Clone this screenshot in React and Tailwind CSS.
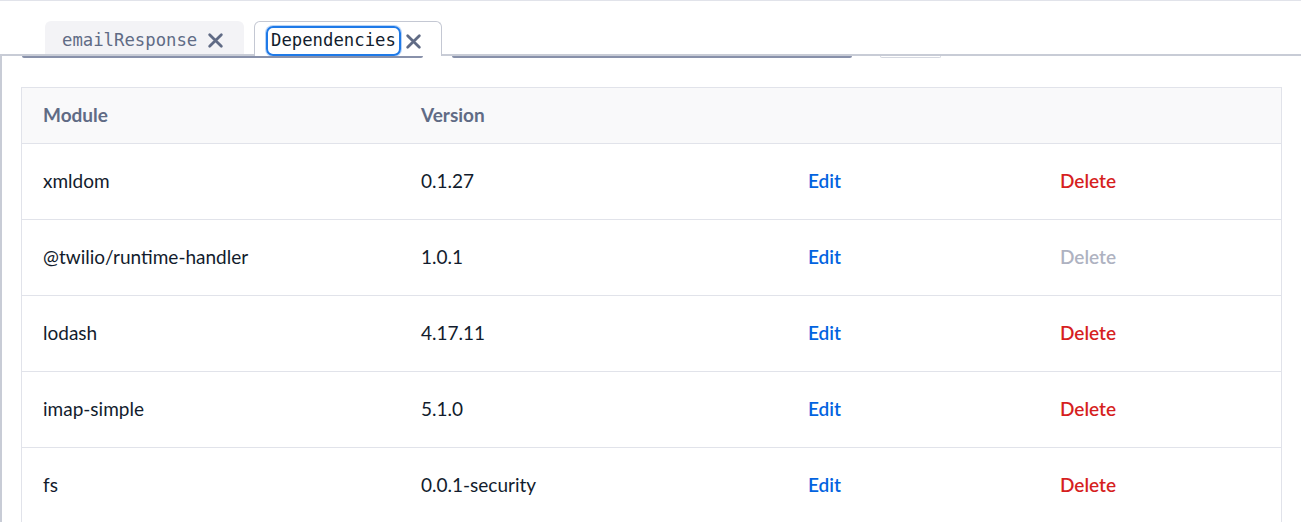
import React from "react";

const rows = [
  { name: "xmldom", version: "0.1.27", canDelete: true },
  { name: "@twilio/runtime-handler", version: "1.0.1", canDelete: false },
  { name: "lodash", version: "4.17.11", canDelete: true },
  { name: "imap-simple", version: "5.1.0", canDelete: true },
  { name: "fs", version: "0.0.1-security", canDelete: true },
];

function CloseIcon() {
  return (
    <svg width="17" height="17" viewBox="0 0 16 16" className="text-[#606b85]">
      <path d="M2.5 2.5l11 11M13.5 2.5l-11 11" stroke="currentColor" strokeWidth="2.6" strokeLinecap="round" />
    </svg>
  );
}

export default function App() {
  return (
    <div className="w-[1301px] h-[522px] overflow-hidden bg-white font-['Lato',sans-serif] border-t border-[#e1e3ea]">
      {/* tab bar */}
      <div className="h-[55px] flex items-end border-b-2 border-[#c8ccd6]">
        <div className="ml-[45px] w-[199px] h-[33px] rounded-t-[6px] bg-[#f3f3f6] flex items-center pl-[17px] pt-[6px] gap-[10px] font-['DejaVu_Sans_Mono',monospace] text-[17.3px] text-[#606b85]">
          <span>emailResponse</span>
          <CloseIcon />
        </div>
        <div className="ml-[10px] w-[188px] h-[35px] mb-[-2px] rounded-t-[6px] bg-white border border-b-0 border-[#c4c8d3] flex items-start pl-[11px] pt-[4px] gap-[4px]">
          <span className="h-[30px] px-[3px] flex items-center rounded-[7px] border-2 border-[#1f7ae8] shadow-[0_0_0_1px_#b8d4f8] font-['DejaVu_Sans_Mono',monospace] text-[17.3px] text-[#121c2d]">
            Dependencies
          </span>
          <span className="mt-[7px]">
            <CloseIcon />
          </span>
        </div>
      </div>

      {/* panel */}
      <div className="border-l-2 border-[#c8ccd6] h-full">
        <div className="flex h-[2px] items-end">
          <div className="ml-[20px] w-[401px] h-[2px] border-b-2 border-x border-[#8891aa] rounded-b-[3px]" />
          <div className="ml-[29px] w-[400px] h-[2px] border-b-2 border-x border-[#8891aa] rounded-b-[3px]" />
          <div className="ml-[28px] w-[61px] h-[2px] border-b border-x border-[#d4d7df] rounded-b-[3px]" />
        </div>

        <div className="ml-[19px] mt-[29px] w-[1261px] border border-[#e1e3ea] text-[19px]">
          <div className="grid grid-cols-[378px_387px_252px_1fr] h-[55px] items-center bg-[#f9f9fa] font-bold text-[#606b85]">
            <div className="pl-[21px]">Module</div>
            <div className="pl-[21px]">Version</div>
            <div />
            <div />
          </div>
          {rows.map((r) => (
            <div
              key={r.name}
              className="grid grid-cols-[378px_387px_252px_1fr] h-[76px] items-center border-t border-[#e1e3ea] text-[#121c2d]"
            >
              <div className="pl-[21px]">{r.name}</div>
              <div className="pl-[21px]">{r.version}</div>
              <div className="pl-[21px] font-semibold text-[#0263e0]">Edit</div>
              <div className={`pl-[21px] font-semibold ${r.canDelete ? "text-[#d61f1f]" : "text-[#aeb2c1]"}`}>
                Delete
              </div>
            </div>
          ))}
        </div>
      </div>
    </div>
  );
}
